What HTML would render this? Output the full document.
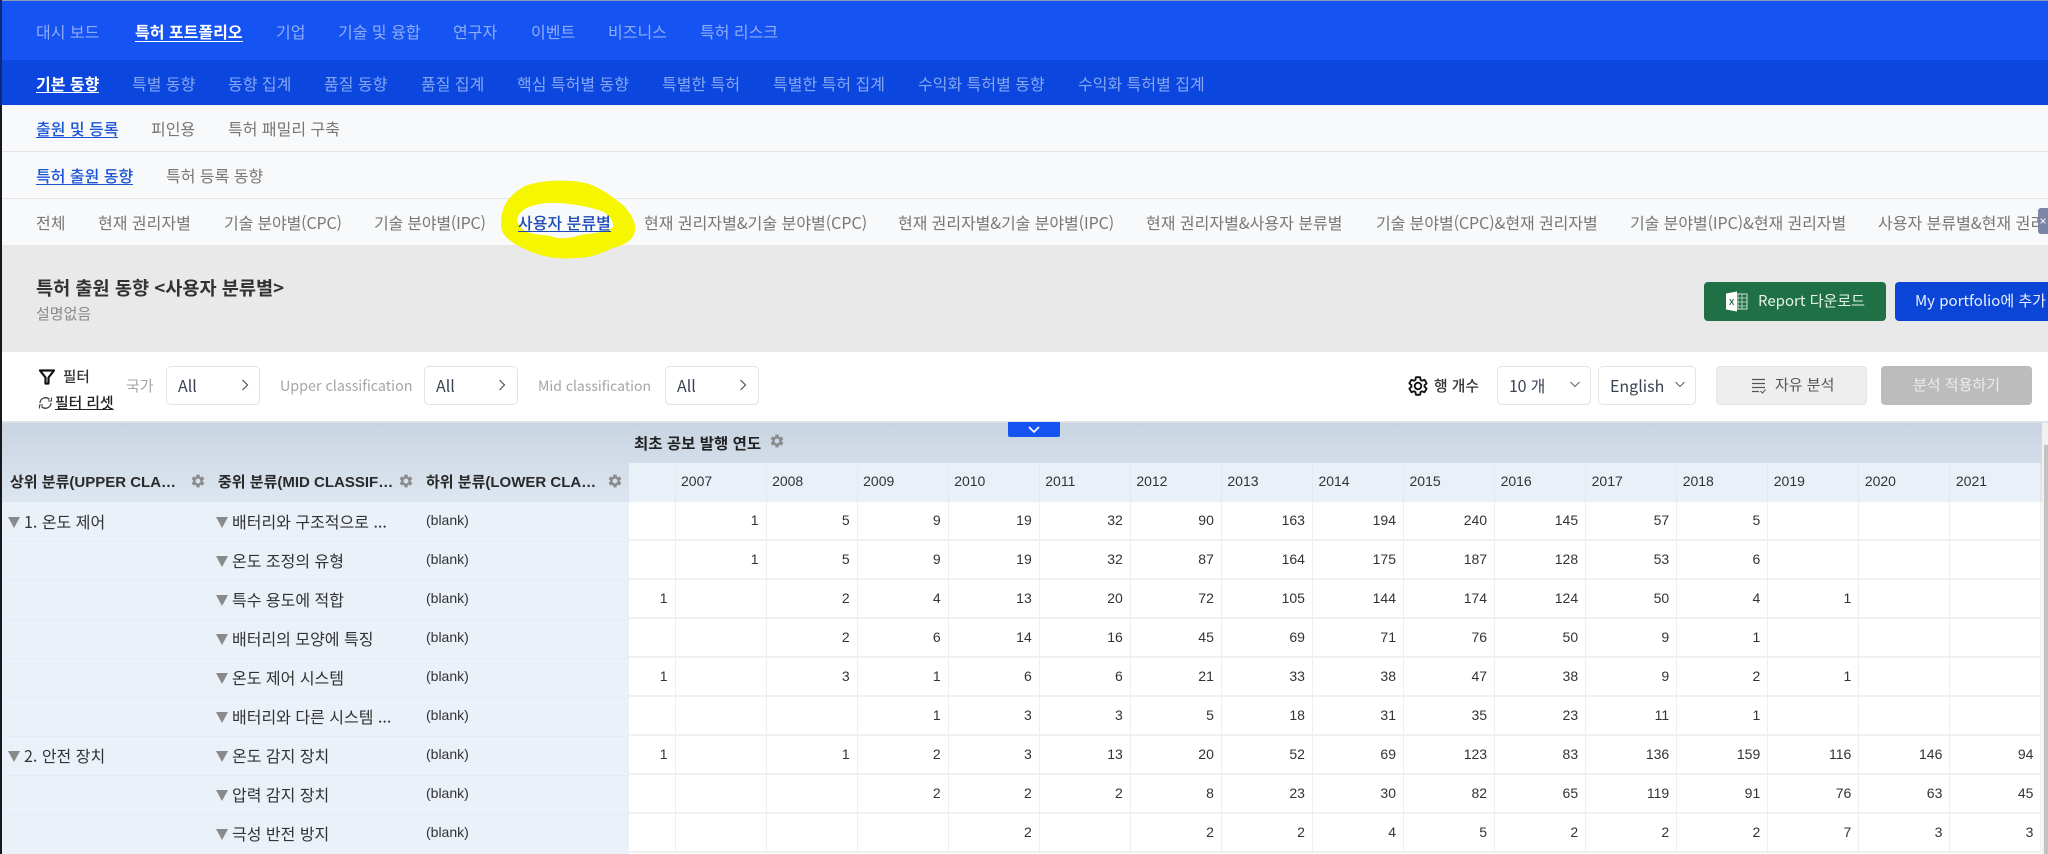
<!DOCTYPE html>
<html lang="ko"><head><meta charset="utf-8"><title>특허 출원 동향</title>
<style>
html,body{margin:0;padding:0}
body{width:2048px;height:854px;overflow:hidden;position:relative;background:#fff;font-family:"Noto Sans CJK KR","Liberation Sans",sans-serif;color:#333}
.b{position:absolute}
.t{position:absolute;white-space:nowrap;line-height:20px;font-size:16px}
.n1{color:#8fadf6}.n2{color:#86a8f4}.w{color:#fff;font-weight:700}
.g{color:#777}.a{color:#1a55d8;font-weight:500}
.u{position:absolute;height:1px}
.sel{position:absolute;top:366px;height:37px;background:#fff;border:1px solid #e3e3e3;border-radius:5px}
.r{position:absolute;left:629px;width:1412px;height:39px;display:grid;grid-template-columns:46.5px repeat(15,91.07px);font:14px/36px "Liberation Sans",sans-serif;color:#333;box-sizing:border-box;border-bottom:2px solid #f0f0f0}
.r span{text-align:right;padding-right:7px;border-right:1px solid #eeeeee;box-sizing:border-box}
.y{position:absolute;left:629px;top:463px;width:1412px;height:39px;display:grid;grid-template-columns:46.5px repeat(15,91.07px);font:14px/36px "Liberation Sans",sans-serif;color:#333;background:#e9f0f8}
.y span{padding-left:5.5px;border-right:1px solid #e0e8f1;box-sizing:border-box}
.k{position:absolute;white-space:nowrap;font:16px/20px "Noto Sans CJK KR",sans-serif;color:#333;left:232px}
.m{position:absolute;white-space:nowrap;font:14px/20px "Liberation Sans",sans-serif;color:#333;left:426px}
.tri{position:absolute;width:0;height:0;border-left:6.5px solid transparent;border-right:6.5px solid transparent;border-top:11px solid #8a8a8a}
.h{position:absolute;white-space:nowrap;top:473px;font:700 15px/20px "Liberation Sans","Noto Sans CJK KR",sans-serif;color:#2a2a2a}
.ln{position:absolute;left:3px;width:626px;height:1px;background:#e3ebf4}
</style></head><body>
<svg width="0" height="0" style="position:absolute"><defs><path id="gear" d="M19.14 12.94c.04-.3.06-.61.06-.94 0-.32-.02-.64-.07-.94l2.03-1.58c.18-.14.23-.41.12-.61l-1.92-3.32c-.12-.22-.37-.29-.59-.22l-2.39.96c-.5-.38-1.03-.7-1.62-.94l-.36-2.54c-.04-.24-.24-.41-.48-.41h-3.84c-.24 0-.43.17-.47.41l-.36 2.54c-.59.24-1.13.57-1.62.94l-2.39-.96c-.22-.08-.47 0-.59.22L2.74 8.87c-.12.21-.08.47.12.61l2.03 1.58c-.05.3-.09.63-.09.94s.02.64.07.94l-2.03 1.58c-.18.14-.23.41-.12.61l1.92 3.32c.12.22.37.29.59.22l2.39-.96c.5.38 1.03.7 1.62.94l.36 2.54c.05.24.24.41.48.41h3.84c.24 0 .44-.17.47-.41l.36-2.54c.59-.24 1.13-.56 1.62-.94l2.39.96c.22.08.47 0 .59-.22l1.92-3.32c.12-.22.07-.47-.12-.61l-2.01-1.58zM12 15.6c-1.98 0-3.6-1.62-3.6-3.6s1.62-3.6 3.6-3.6 3.6 1.62 3.6 3.6-1.62 3.6-3.6 3.6z"/></defs></svg>

<!-- bands -->
<div class="b" style="left:0;top:0;width:2048px;height:60px;background:#1553f2;border-top:1px solid #8d99b5;box-sizing:border-box"></div>
<div class="b" style="left:0;top:60px;width:2048px;height:45px;background:#0b46de"></div>
<div class="b" style="left:0;top:105px;width:2048px;height:140px;background:#f8f9fa"></div>
<div class="b" style="left:0;top:151px;width:2048px;height:1px;background:#e4e4e4"></div>
<div class="b" style="left:0;top:198px;width:2048px;height:1px;background:#e4e4e4"></div>
<div class="b" style="left:0;top:245px;width:2048px;height:107px;background:#e9e9e9"></div>
<div class="b" style="left:0;top:352px;width:2048px;height:70px;background:#fff"></div>
<div class="b" style="left:0;top:421px;width:2048px;height:2px;background:#dfe2e6"></div>

<!-- nav 1 -->
<div class="t n1" style="left:36px;top:21px">대시 보드</div>
<div class="t w" style="left:135px;top:21px">특허 포트폴리오</div><div class="u" style="left:135px;top:41px;width:108px;background:#fff"></div>
<div class="t n1" style="left:276px;top:21px">기업</div>
<div class="t n1" style="left:338px;top:21px">기술 및 융합</div>
<div class="t n1" style="left:453px;top:21px">연구자</div>
<div class="t n1" style="left:531px;top:21px">이벤트</div>
<div class="t n1" style="left:608px;top:21px">비즈니스</div>
<div class="t n1" style="left:700px;top:21px">특허 리스크</div>
<!-- nav 2 -->
<div class="t w" style="left:36px;top:73px">기본 동향</div><div class="u" style="left:36px;top:92px;width:63px;background:#fff"></div>
<div class="t n2" style="left:132px;top:73px">특별 동향</div>
<div class="t n2" style="left:228px;top:73px">동향 집계</div>
<div class="t n2" style="left:324px;top:73px">품질 동향</div>
<div class="t n2" style="left:421px;top:73px">품질 집계</div>
<div class="t n2" style="left:517px;top:73px">핵심 특허별 동향</div>
<div class="t n2" style="left:662px;top:73px">특별한 특허</div>
<div class="t n2" style="left:773px;top:73px">특별한 특허 집계</div>
<div class="t n2" style="left:918px;top:73px">수익화 특허별 동향</div>
<div class="t n2" style="left:1078px;top:73px">수익화 특허별 집계</div>
<!-- sub 1 -->
<div class="t a" style="left:36px;top:118px">출원 및 등록</div><div class="u" style="left:36px;top:137px;width:82px;background:#1a55d8"></div>
<div class="t g" style="left:151px;top:118px">피인용</div>
<div class="t g" style="left:228px;top:118px">특허 패밀리 구축</div>
<!-- sub 2 -->
<div class="t a" style="left:36px;top:165px">특허 출원 동향</div><div class="u" style="left:36px;top:184px;width:97px;background:#1a55d8"></div>
<div class="t g" style="left:166px;top:165px">특허 등록 동향</div>

<!-- highlight -->
<svg class="b" style="left:0;top:0" width="2048" height="300"><path fill-rule="evenodd" fill="#f6f600" d="M501 225C501 210 505 198 523 187C535 181 560 179 580 182C596 184 610 195 623 205C632 214 636 224 635 230C634 240 625 245 613 248C600 254 590 258 575 258C555 260 535 255 523 248C510 242 501 235 501 225ZM517 220C519 210 528 205 547 203C562 202 590 206 604 212C610 216 614 222 613 227C608 232 595 233 580 235C572 238 560 240 550 236C540 234 521 236 517 220Z"/></svg>

<!-- sub 3 -->
<div class="t g" style="left:36px;top:212px">전체</div>
<div class="t g" style="left:98px;top:212px">현재 권리자별</div>
<div class="t g" style="left:224px;top:212px;letter-spacing:-.15px">기술 분야별(CPC)</div>
<div class="t g" style="left:374px;top:212px;letter-spacing:-.2px">기술 분야별(IPC)</div>
<div class="t" style="left:518px;top:212px;color:#1c4ab8;font-weight:500">사용자 분류별</div><div class="u" style="left:518px;top:231px;width:93px;background:#1c4ab8"></div>
<div class="t g" style="left:644px;top:212px">현재 권리자별&amp;기술 분야별(CPC)</div>
<div class="t g" style="left:898px;top:212px;letter-spacing:-.08px">현재 권리자별&amp;기술 분야별(IPC)</div>
<div class="t g" style="left:1146px;top:212px">현재 권리자별&amp;사용자 분류별</div>
<div class="t g" style="left:1376px;top:212px;letter-spacing:-.08px">기술 분야별(CPC)&amp;현재 권리자별</div>
<div class="t g" style="left:1630px;top:212px;letter-spacing:-.08px">기술 분야별(IPC)&amp;현재 권리자별</div>
<div class="t g" style="left:1878px;top:212px">사용자 분류별&amp;현재 권리자별</div>
<div class="b" style="left:2038px;top:208px;width:10px;height:26px;background:#7b86a6;border-radius:3px 0 0 3px;color:#fff;font:12px/26px 'Liberation Sans',sans-serif;text-align:center">×</div>

<!-- title -->
<div class="t" style="left:36px;top:278px;font-size:18.6px;font-weight:700;color:#333">특허 출원 동향 &lt;사용자 분류별&gt;</div>
<div class="t" style="left:36px;top:304px;color:#888;font-size:15px">설명없음</div>

<!-- buttons -->
<div class="b" style="left:1704px;top:282px;width:182px;height:39px;background:#1f7044;border-radius:4px"></div>
<svg class="b" style="left:1726px;top:291px" width="22" height="21" viewBox="0 0 22 21"><rect x="8" y="3" width="13" height="15" fill="none" stroke="#cfe3d8" stroke-width="1"/><path d="M12 3v15M16 3v15M8 7h13M8 11h13M8 15h13" stroke="#cfe3d8" stroke-width=".8"/><path d="M0 2.500L11 0.500V20.500L0 18.500Z" fill="#fff"/><text x="3" y="14" font-family="Liberation Sans,sans-serif" font-size="8" font-weight="700" fill="#1f7044">X</text></svg>
<div class="t" style="left:1758px;top:291px;color:#e8f3ec;font-size:15px">Report 다운로드</div>
<div class="b" style="left:1895px;top:282px;width:153px;height:39px;background:#0b45d8;border-radius:4px 0 0 4px"></div>
<div class="t" style="left:1915px;top:291px;color:#e9effc;font-size:15px">My portfolio에 추가</div>

<!-- filter -->
<svg class="b" style="left:38px;top:368px" width="18" height="18" viewBox="0 0 18 18"><path d="M2 2.500H16L10.500 9.500V15.500H7.500V9.500Z" fill="none" stroke="#111" stroke-width="2.200" stroke-linejoin="round"/></svg>
<div class="t" style="left:63px;top:367px;font-size:14.5px;font-weight:500;color:#333">필터</div>
<svg class="b" style="left:37px;top:395px" width="17" height="16" viewBox="0 0 17 16"><path d="M3 8a5.500 5.500 0 0 1 9.500-3.500M14 8a5.500 5.500 0 0 1-9.500 3.500" fill="none" stroke="#444" stroke-width="1.300"/><path d="M14.500 2.500v3.500h-3.500M2.500 13.500v-3.500h3.500" fill="none" stroke="#444" stroke-width="1.100"/></svg>
<div class="t" style="left:55px;top:393px;font-size:14.8px;font-weight:500;color:#222;text-decoration:underline">필터 리셋</div>
<div class="t" style="left:126px;top:376px;font-size:15px;color:#a5a5a5">국가</div>
<div class="sel" style="left:166px;width:92px"></div><div class="t" style="left:178px;top:375px;font-size:16px;color:#3a4354">All</div>
<div class="t" style="left:280px;top:376px;font-size:14.3px;color:#a5a5a5">Upper classification</div>
<div class="sel" style="left:424px;width:92px"></div><div class="t" style="left:436px;top:375px;font-size:16px;color:#3a4354">All</div>
<div class="t" style="left:538px;top:376px;font-size:14px;color:#a5a5a5">Mid classification</div>
<div class="sel" style="left:665px;width:92px"></div><div class="t" style="left:677px;top:375px;font-size:16px;color:#3a4354">All</div>
<svg class="b" style="left:240px;top:378px" width="10" height="14" viewBox="0 0 10 14"><path d="M2.500 2L7.500 7L2.500 12" fill="none" stroke="#555" stroke-width="1.200"/></svg>
<svg class="b" style="left:497px;top:378px" width="10" height="14" viewBox="0 0 10 14"><path d="M2.500 2L7.500 7L2.500 12" fill="none" stroke="#555" stroke-width="1.200"/></svg>
<svg class="b" style="left:738px;top:378px" width="10" height="14" viewBox="0 0 10 14"><path d="M2.500 2L7.500 7L2.500 12" fill="none" stroke="#555" stroke-width="1.200"/></svg>

<svg class="b" style="left:1407px;top:375px" width="22" height="22" viewBox="0 0 24 24"><use href="#gear" fill="none" stroke="#111" stroke-width="2"/></svg>
<div class="t" style="left:1434px;top:376px;font-size:14.8px;font-weight:500;color:#333">행 개수</div>
<div class="sel" style="left:1497px;width:92px"></div><div class="t" style="left:1509px;top:375px;color:#3a4354;letter-spacing:-.2px">10 개</div>
<svg class="b" style="left:1569px;top:378px" width="12" height="12" viewBox="0 0 12 12"><path d="M1.500 4L6 8.500L10.500 4" fill="none" stroke="#666" stroke-width="1.100"/></svg>
<div class="sel" style="left:1598px;width:96px"></div><div class="t" style="left:1610px;top:375px;color:#3a4354">English</div>
<svg class="b" style="left:1674px;top:378px" width="12" height="12" viewBox="0 0 12 12"><path d="M1.500 4L6 8.500L10.500 4" fill="none" stroke="#666" stroke-width="1.100"/></svg>
<div class="b" style="left:1716px;top:366px;width:151px;height:39px;background:#eeeeee;border:1px solid #e4e4e4;border-radius:4px;box-sizing:border-box"></div>
<svg class="b" style="left:1752px;top:378px" width="14" height="16" viewBox="0 0 14 16"><path d="M0 1.500H13M0 5.500H13M0 9.500H13M0 13.500H7" stroke="#555" stroke-width="1.200" fill="none"/><path d="M8.500 13L10.500 15L13.500 11.500" stroke="#555" stroke-width="1" fill="none"/></svg>
<div class="t" style="left:1775px;top:375px;color:#555;font-size:15px">자유 분석</div>
<div class="b" style="left:1881px;top:366px;width:151px;height:39px;background:#bcbcbc;border-radius:4px"></div>
<div class="t" style="left:1913px;top:375px;color:#ececec;font-size:15px">분석 적용하기</div>

<!-- table header -->
<div class="b" style="left:0;top:423px;width:2042px;height:79px;background:linear-gradient(#c8d4e1,#dde6f0)"></div>
<div class="b" style="left:2042px;top:423px;width:6px;height:431px;background:#f1f1f1"></div>
<div class="b" style="left:2044px;top:445px;width:4px;height:409px;background:#c2c2c2"></div>
<div class="b" style="left:1008px;top:422px;width:52px;height:15px;background:#1553f2;border-radius:0 0 2px 2px"></div>
<svg class="b" style="left:1027px;top:424px" width="14" height="11" viewBox="0 0 14 11"><path d="M2 3L7 8L12 3" fill="none" stroke="#fff" stroke-width="1.600"/></svg>
<div class="t" style="left:634px;top:433px;font-size:15.500px;font-weight:700;color:#222">최초 공보 발행 연도</div>
<svg class="b" style="left:769px;top:433px" width="16" height="16" viewBox="0 0 24 24"><use href="#gear" fill="#8c8c8c"/></svg>
<div class="h" style="left:10px">상위 분류(UPPER CLA…</div>
<svg class="b" style="left:190px;top:473px" width="16" height="16" viewBox="0 0 24 24"><use href="#gear" fill="#8c8c8c"/></svg>
<div class="h" style="left:218px">중위 분류(MID CLASSIF…</div>
<svg class="b" style="left:398px;top:473px" width="16" height="16" viewBox="0 0 24 24"><use href="#gear" fill="#8c8c8c"/></svg>
<div class="h" style="left:426px">하위 분류(LOWER CLA…</div>
<svg class="b" style="left:607px;top:473px" width="16" height="16" viewBox="0 0 24 24"><use href="#gear" fill="#8c8c8c"/></svg>

<div class="y"><span></span><span>2007</span><span>2008</span><span>2009</span><span>2010</span><span>2011</span><span>2012</span><span>2013</span><span>2014</span><span>2015</span><span>2016</span><span>2017</span><span>2018</span><span>2019</span><span>2020</span><span>2021</span></div>

<!-- left body -->
<div class="b" style="left:0;top:502px;width:629px;height:352px;background:#eaf1f9"></div>
<div class="ln" style="top:541px"></div><div class="ln" style="top:580px"></div><div class="ln" style="top:619px"></div><div class="ln" style="top:658px"></div><div class="ln" style="top:697px"></div><div class="ln" style="top:736px"></div><div class="ln" style="top:775px"></div><div class="ln" style="top:814px"></div>

<div class="tri" style="left:8px;top:517px"></div><div class="k" style="left:24px;top:511px">1. 온도 제어</div>
<div class="tri" style="left:8px;top:751px"></div><div class="k" style="left:24px;top:745px">2. 안전 장치</div>

<div class="tri" style="left:216px;top:517px"></div><div class="k" style="top:511px">배터리와 구조적으로 ...</div><div class="m" style="top:510px">(blank)</div>
<div class="tri" style="left:216px;top:556px"></div><div class="k" style="top:550px">온도 조정의 유형</div><div class="m" style="top:549px">(blank)</div>
<div class="tri" style="left:216px;top:595px"></div><div class="k" style="top:589px">특수 용도에 적합</div><div class="m" style="top:588px">(blank)</div>
<div class="tri" style="left:216px;top:634px"></div><div class="k" style="top:628px">배터리의 모양에 특징</div><div class="m" style="top:627px">(blank)</div>
<div class="tri" style="left:216px;top:673px"></div><div class="k" style="top:667px">온도 제어 시스템</div><div class="m" style="top:666px">(blank)</div>
<div class="tri" style="left:216px;top:712px"></div><div class="k" style="top:706px">배터리와 다른 시스템 ...</div><div class="m" style="top:705px">(blank)</div>
<div class="tri" style="left:216px;top:751px"></div><div class="k" style="top:745px">온도 감지 장치</div><div class="m" style="top:744px">(blank)</div>
<div class="tri" style="left:216px;top:790px"></div><div class="k" style="top:784px">압력 감지 장치</div><div class="m" style="top:783px">(blank)</div>
<div class="tri" style="left:216px;top:829px"></div><div class="k" style="top:823px">극성 반전 방지</div><div class="m" style="top:822px">(blank)</div>

<!-- data -->
<div class="r" style="top:502px"><span></span><span>1</span><span>5</span><span>9</span><span>19</span><span>32</span><span>90</span><span>163</span><span>194</span><span>240</span><span>145</span><span>57</span><span>5</span><span></span><span></span><span></span></div>
<div class="r" style="top:541px"><span></span><span>1</span><span>5</span><span>9</span><span>19</span><span>32</span><span>87</span><span>164</span><span>175</span><span>187</span><span>128</span><span>53</span><span>6</span><span></span><span></span><span></span></div>
<div class="r" style="top:580px"><span>1</span><span></span><span>2</span><span>4</span><span>13</span><span>20</span><span>72</span><span>105</span><span>144</span><span>174</span><span>124</span><span>50</span><span>4</span><span>1</span><span></span><span></span></div>
<div class="r" style="top:619px"><span></span><span></span><span>2</span><span>6</span><span>14</span><span>16</span><span>45</span><span>69</span><span>71</span><span>76</span><span>50</span><span>9</span><span>1</span><span></span><span></span><span></span></div>
<div class="r" style="top:658px"><span>1</span><span></span><span>3</span><span>1</span><span>6</span><span>6</span><span>21</span><span>33</span><span>38</span><span>47</span><span>38</span><span>9</span><span>2</span><span>1</span><span></span><span></span></div>
<div class="r" style="top:697px"><span></span><span></span><span></span><span>1</span><span>3</span><span>3</span><span>5</span><span>18</span><span>31</span><span>35</span><span>23</span><span>11</span><span>1</span><span></span><span></span><span></span></div>
<div class="r" style="top:736px"><span>1</span><span></span><span>1</span><span>2</span><span>3</span><span>13</span><span>20</span><span>52</span><span>69</span><span>123</span><span>83</span><span>136</span><span>159</span><span>116</span><span>146</span><span>94</span></div>
<div class="r" style="top:775px"><span></span><span></span><span></span><span>2</span><span>2</span><span>2</span><span>8</span><span>23</span><span>30</span><span>82</span><span>65</span><span>119</span><span>91</span><span>76</span><span>63</span><span>45</span></div>
<div class="r" style="top:814px"><span></span><span></span><span></span><span></span><span>2</span><span></span><span>2</span><span>2</span><span>4</span><span>5</span><span>2</span><span>2</span><span>2</span><span>7</span><span>3</span><span>3</span></div>

<!-- left edge -->
<div class="b" style="left:0;top:0;width:2px;height:245px;background:#0d2a78"></div>
<div class="b" style="left:0;top:105px;width:2px;height:749px;background:#17181c"></div>
</body></html>
